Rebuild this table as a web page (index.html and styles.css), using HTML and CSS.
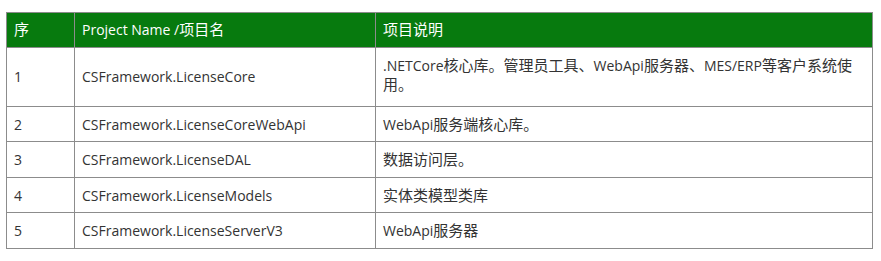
FILE: index.html
```html
<!DOCTYPE html>
<html lang="zh-CN">
<head>
<meta charset="utf-8">
<title>Projects</title>
<link rel="stylesheet" href="styles.css">
</head>
<body>
<table class="proj-table">
  <colgroup>
    <col class="c-no">
    <col class="c-name">
    <col class="c-desc">
  </colgroup>
  <thead>
    <tr>
      <th><span class="zh">序</span></th>
      <th>Project Name /<span class="zh">项目名</span></th>
      <th><span class="zh">项目说明</span></th>
    </tr>
  </thead>
  <tbody>
    <tr>
      <td>1</td>
      <td>CSFramework.LicenseCore</td>
      <td class="desc-tall">.NETCore<span class="zh">核心库。管理员工具、</span>WebApi<span class="zh">服务器、</span>MES/ERP<span class="zh">等客户系统使</span><span class="zh">用。</span></td>
    </tr>
    <tr>
      <td>2</td>
      <td>CSFramework.LicenseCoreWebApi</td>
      <td>WebApi<span class="zh">服务端核心库。</span></td>
    </tr>
    <tr>
      <td>3</td>
      <td>CSFramework.LicenseDAL</td>
      <td><span class="zh">数据访问层。</span></td>
    </tr>
    <tr>
      <td>4</td>
      <td>CSFramework.LicenseModels</td>
      <td><span class="zh">实体类模型类库</span></td>
    </tr>
    <tr>
      <td>5</td>
      <td>CSFramework.LicenseServerV3</td>
      <td>WebApi<span class="zh">服务器</span></td>
    </tr>
  </tbody>
</table>
</body>
</html>
```
FILE: styles.css
```css
html, body {
  background: #ffffff;
}
body {
  margin: 12px 0 0 6px;
  font-family: "Open Sans", "Noto Sans CJK SC", sans-serif;
  font-size: 14px;
  color: #333333;
}
.proj-table {
  border-collapse: collapse;
  table-layout: fixed;
  width: 867px;
}
.c-no { width: 68px; }
.c-name { width: 301px; }
.proj-table th,
.proj-table td {
  border: 1px solid #8c8c8c;
  padding: 9px 7px 8px;
  line-height: 17.5px;
  text-align: left;
  vertical-align: middle;
}
.proj-table th {
  background: #077a0e;
  color: #ffffff;
  font-weight: normal;
  padding: 8px 7px 8px;
}
.proj-table td.desc-tall {
  line-height: 19px;
  padding-top: 8px;
  padding-bottom: 12px;
}
.zh {
  font-family: "Noto Sans CJK SC", sans-serif;
  font-size: 15px;
  line-height: 1;
}
```
